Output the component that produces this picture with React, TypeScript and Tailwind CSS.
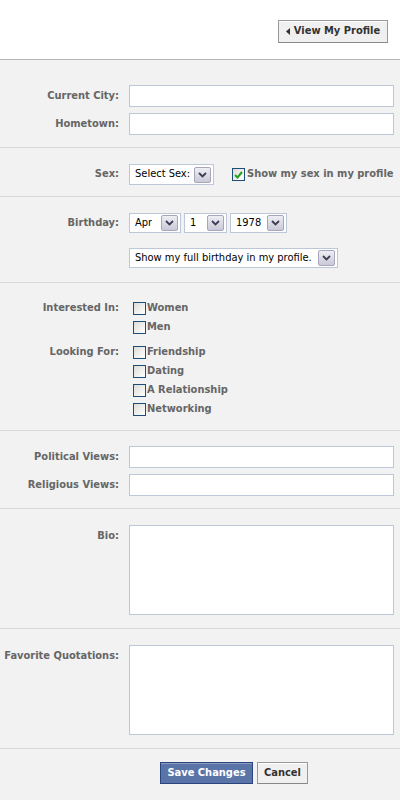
import React from 'react'

const font = { fontFamily: '"DejaVu Sans Condensed", "DejaVu Sans", Tahoma, sans-serif' }

function Arrow() {
  return (
    <span className="flex h-[16px] w-[17px] shrink-0 items-center justify-center rounded-[2px] border border-[#a7a6bb] bg-gradient-to-b from-[#eeeef4] to-[#c9c9d8]">
      <svg width="9" height="6" viewBox="0 0 9 6">
        <path d="M1 1 L4.5 4.5 L8 1" fill="none" stroke="#3d3d55" strokeWidth="1.8" />
      </svg>
    </span>
  )
}

function Select({ value, w }: { value: string; w: string }) {
  return (
    <div className={`flex h-[20px] items-center justify-between border border-[#bdc7d8] bg-white pl-[5px] pr-[2px] text-[11px] text-black ${w}`}>
      <span className="truncate">{value}</span>
      <Arrow />
    </div>
  )
}

function Check({ checked = false }: { checked?: boolean }) {
  return (
    <span className="flex h-[13px] w-[13px] shrink-0 items-center justify-center border border-[#1d4e79] bg-gradient-to-br from-[#dcdcd7] to-white">
      {checked && (
        <svg width="9" height="8" viewBox="0 0 9 8">
          <path d="M1 4 L3.5 6.5 L8 1" fill="none" stroke="#21a121" strokeWidth="2" />
        </svg>
      )}
    </span>
  )
}

function Label({ children, top = false }: { children: React.ReactNode; top?: boolean }) {
  return (
    <div className={`w-[119px] shrink-0 whitespace-nowrap text-right text-[11px] font-bold text-[#666] ${top ? 'pt-[3px]' : ''}`}>
      {children}
    </div>
  )
}

function TextRow({ label }: { label: string }) {
  return (
    <div className="flex items-center gap-[10px]">
      <Label>{label}</Label>
      <div className="h-[22px] w-[265px] border border-[#bdc7d8] bg-white" />
    </div>
  )
}

function CheckRow({ text, checked }: { text: string; checked?: boolean }) {
  return (
    <div className="flex h-[19px] items-center gap-[1px] pl-[4px] text-[11px] font-bold text-[#666]">
      <Check checked={checked} />
      <span>{text}</span>
    </div>
  )
}

const Divider = () => <div className="h-px bg-[#d8d8d8]" />

export default function App() {
  return (
    <div style={font} className="w-[400px] min-h-[800px] bg-[#f2f2f2]">
      {/* header */}
      <div className="flex h-[60px] items-start justify-end border-b border-[#b5b5b5] bg-white pr-[12px] pt-[20px]">
        <button className="flex h-[23px] w-[110px] items-center justify-center gap-[4px] border border-[#999] border-b-[#888] bg-[#f0f0f0] text-[11px] font-bold text-[#333] shadow-[inset_0_1px_0_#fff]">
          <svg width="4" height="7" viewBox="0 0 4 7">
            <path d="M4 0 L0 3.5 L4 7 Z" fill="#333" />
          </svg>
          View My Profile
        </button>
      </div>

      <div className="flex flex-col gap-[6px] pb-[12px] pt-[25px]">
        <TextRow label="Current City:" />
        <TextRow label="Hometown:" />
      </div>
      <Divider />

      <div className="flex items-center gap-[10px] pb-[11px] pt-[16px]">
        <Label>Sex:</Label>
        <Select value="Select Sex:" w="w-[85px] h-[21px]" />
        <div className="ml-[8px] flex items-center gap-[2px] whitespace-nowrap text-[11px] font-bold text-[#666]">
          <Check checked />
          <span>Show my sex in my profile</span>
        </div>
      </div>
      <Divider />

      <div className="flex gap-[10px] pb-[14px] pt-[16px]">
        <div className="flex h-[20px] items-center">
          <Label>Birthday:</Label>
        </div>
        <div className="flex flex-col gap-[15px]">
          <div className="flex gap-[3px]">
            <Select value="Apr" w="w-[52px]" />
            <Select value="1" w="w-[43px]" />
            <Select value="1978" w="w-[57px]" />
          </div>
          <Select value="Show my full birthday in my profile." w="w-[209px]" />
        </div>
      </div>
      <Divider />

      <div className="flex flex-col gap-[6px] pb-[11px] pt-[16px]">
        <div className="flex gap-[10px]">
          <div className="flex h-[19px] items-center">
            <Label>Interested In:</Label>
          </div>
          <div className="flex flex-col">
            <CheckRow text="Women" />
            <CheckRow text="Men" />
          </div>
        </div>
        <div className="flex gap-[10px]">
          <div className="flex h-[19px] items-center">
            <Label>Looking For:</Label>
          </div>
          <div className="flex flex-col">
            <CheckRow text="Friendship" />
            <CheckRow text="Dating" />
            <CheckRow text="A Relationship" />
            <CheckRow text="Networking" />
          </div>
        </div>
      </div>
      <Divider />

      <div className="flex flex-col gap-[6px] pb-[12px] pt-[15px]">
        <TextRow label="Political Views:" />
        <TextRow label="Religious Views:" />
      </div>
      <Divider />

      <div className="flex gap-[10px] pb-[13px] pt-[16px]">
        <Label top>Bio:</Label>
        <div className="h-[90px] w-[265px] border border-[#bdc7d8] bg-white" />
      </div>
      <Divider />

      <div className="flex gap-[10px] pb-[13px] pt-[16px]">
        <Label top>Favorite Quotations:</Label>
        <div className="h-[90px] w-[265px] border border-[#bdc7d8] bg-white" />
      </div>
      <Divider />

      <div className="flex gap-[4px] pl-[160px] pt-[13px]">
        <button className="h-[22px] w-[93px] border border-[#29447e] bg-[#5b74a8] text-[11px] font-bold text-white shadow-[inset_0_1px_0_#8a9cc2]">
          Save Changes
        </button>
        <button className="h-[22px] w-[51px] border border-[#999] border-b-[#888] bg-[#f0f0f0] text-[11px] font-bold text-[#333] shadow-[inset_0_1px_0_#fff]">
          Cancel
        </button>
      </div>
    </div>
  )
}
